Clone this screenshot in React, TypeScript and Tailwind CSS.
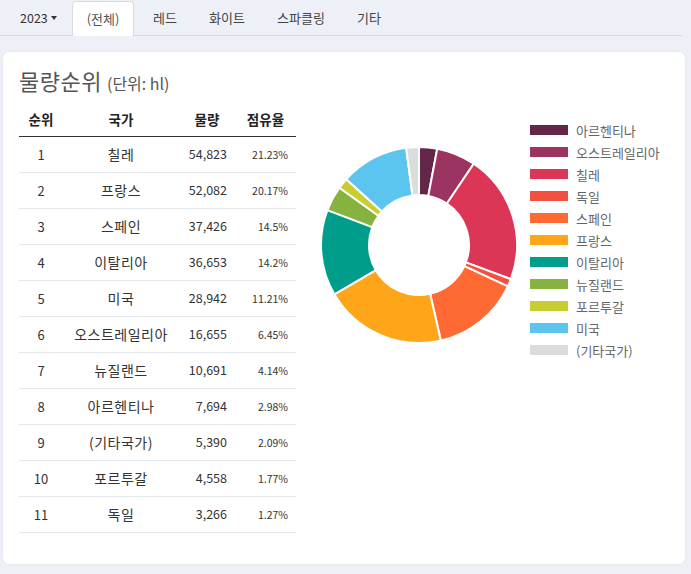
import React from 'react';

type Row = { rank: number; name: string; volume: number; share: string };

const rows: Row[] = [
  { rank: 1, name: '칠레', volume: 54823, share: '21.23%' },
  { rank: 2, name: '프랑스', volume: 52082, share: '20.17%' },
  { rank: 3, name: '스페인', volume: 37426, share: '14.5%' },
  { rank: 4, name: '이탈리아', volume: 36653, share: '14.2%' },
  { rank: 5, name: '미국', volume: 28942, share: '11.21%' },
  { rank: 6, name: '오스트레일리아', volume: 16655, share: '6.45%' },
  { rank: 7, name: '뉴질랜드', volume: 10691, share: '4.14%' },
  { rank: 8, name: '아르헨티나', volume: 7694, share: '2.98%' },
  { rank: 9, name: '(기타국가)', volume: 5390, share: '2.09%' },
  { rank: 10, name: '포르투갈', volume: 4558, share: '1.77%' },
  { rank: 11, name: '독일', volume: 3266, share: '1.27%' },
];

// chart order follows the legend
const slices = [
  { name: '아르헨티나', value: 7694, color: '#632649' },
  { name: '오스트레일리아', value: 16655, color: '#9b3461' },
  { name: '칠레', value: 54823, color: '#dc3656' },
  { name: '독일', value: 3266, color: '#f4503f' },
  { name: '스페인', value: 37426, color: '#ff6a34' },
  { name: '프랑스', value: 52082, color: '#ffa51a' },
  { name: '이탈리아', value: 36653, color: '#009e8a' },
  { name: '뉴질랜드', value: 10691, color: '#86b340' },
  { name: '포르투갈', value: 4558, color: '#c8ce32' },
  { name: '미국', value: 28942, color: '#5bc5f0' },
  { name: '(기타국가)', value: 5390, color: '#dcdcdc' },
];

const tabs = [
  { label: '(전체)', w: 'w-[62px]' },
  { label: '레드', w: 'w-[58px]' },
  { label: '화이트', w: 'w-[62px]' },
  { label: '스파클링', w: 'w-[82px]' },
  { label: '기타', w: 'w-[50px]' },
];

const Donut: React.FC = () => {
  const cx = 105, cy = 105, R = 98, r = 50;
  const total = slices.reduce((s, x) => s + x.value, 0);
  let angle = -Math.PI / 2;
  const pt = (rad: number, a: number) => `${(cx + rad * Math.cos(a)).toFixed(2)} ${(cy + rad * Math.sin(a)).toFixed(2)}`;
  return (
    <svg width={210} height={210} viewBox="0 0 210 210">
      {slices.map(s => {
        const a0 = angle;
        const a1 = angle + (s.value / total) * Math.PI * 2;
        angle = a1;
        const large = a1 - a0 > Math.PI ? 1 : 0;
        const d = `M ${pt(R, a0)} A ${R} ${R} 0 ${large} 1 ${pt(R, a1)} L ${pt(r, a1)} A ${r} ${r} 0 ${large} 0 ${pt(r, a0)} Z`;
        return <path key={s.name} d={d} fill={s.color} stroke="#fff" strokeWidth={2} strokeLinejoin="round" />;
      })}
    </svg>
  );
};

export default function App() {
  return (
    <div
      className="w-[691px] h-[574px] bg-[#edf1f7] overflow-hidden text-[#333]"
      style={{ fontFamily: '"Noto Sans CJK KR", "Noto Sans", sans-serif' }}
    >
      {/* Tabs */}
      <div className="w-[682px] h-[36px] border-b border-[#d5dbe3] flex items-end pl-[4px] gap-[2px]">
        <div className="w-[66px] h-[34px] pl-[16px] flex items-center text-[12.5px] text-[#333] gap-[3px]">
          2023
          <span className="inline-block w-0 h-0 border-l-[3px] border-r-[3px] border-t-[4px] border-l-transparent border-r-transparent border-t-[#333]" />
        </div>
        {tabs.map((t, i) => (
          <div
            key={t.label}
            className={`${t.w} flex items-center justify-center text-[13px] rounded-t-[4px] ${i === 0 ? 'h-[35px] bg-white border border-b-0 border-[#d5dbe3] text-[#555] -mb-[1px]' : 'h-[34px] text-[#444]'}`}
          >
            {t.label}
          </div>
        ))}
      </div>

      {/* Card */}
      <div className="ml-[3px] mt-[16px] w-[682px] h-[512px] bg-white rounded-[6px] shadow-[0_0_3px_rgba(0,0,0,0.08)] pt-[14px] pl-[16px]">
        <div className="flex items-baseline gap-[5px] leading-[28px] text-[#555]">
          <span className="text-[22px] tracking-[0.5px]">물량순위</span>
          <span className="text-[16px]">(단위: hl)</span>
        </div>

        <div className="flex items-start mt-[6px]">
          <div className="w-[277px]">
            <div className="flex h-[34px] items-center text-[13.5px] font-bold text-[#222] border-b border-[#333]">
              <div className="w-[44px] text-center">순위</div>
              <div className="w-[116px] text-center">국가</div>
              <div className="w-[56px] text-center">물량</div>
              <div className="w-[61px] text-center">점유율</div>
            </div>
            {rows.map(r => (
              <div key={r.rank} className="flex h-[36px] items-center border-b border-[#e4e7eb] text-[#333]">
                <div className="w-[44px] text-center text-[13px]">{r.rank}</div>
                <div className="w-[116px] text-center text-[14px] tracking-[0.5px]">{r.name}</div>
                <div className="w-[56px] text-right pr-[8px] text-[12.5px]">{r.volume.toLocaleString('en-US')}</div>
                <div className="w-[61px] text-right pr-[8px] text-[10.5px]">{r.share}</div>
              </div>
            ))}
          </div>

          <div className="ml-[18px] mt-[37px]">
            <Donut />
          </div>

          <div className="ml-[6px] mt-[16px] flex flex-col">
            {slices.map(s => (
              <div key={s.name} className="flex items-center h-[22px]">
                <span className="w-[38px] h-[10px] mr-[8px]" style={{ backgroundColor: s.color }} />
                <span className="text-[13px] text-[#666] leading-none">{s.name}</span>
              </div>
            ))}
          </div>
        </div>
      </div>
    </div>
  );
}
